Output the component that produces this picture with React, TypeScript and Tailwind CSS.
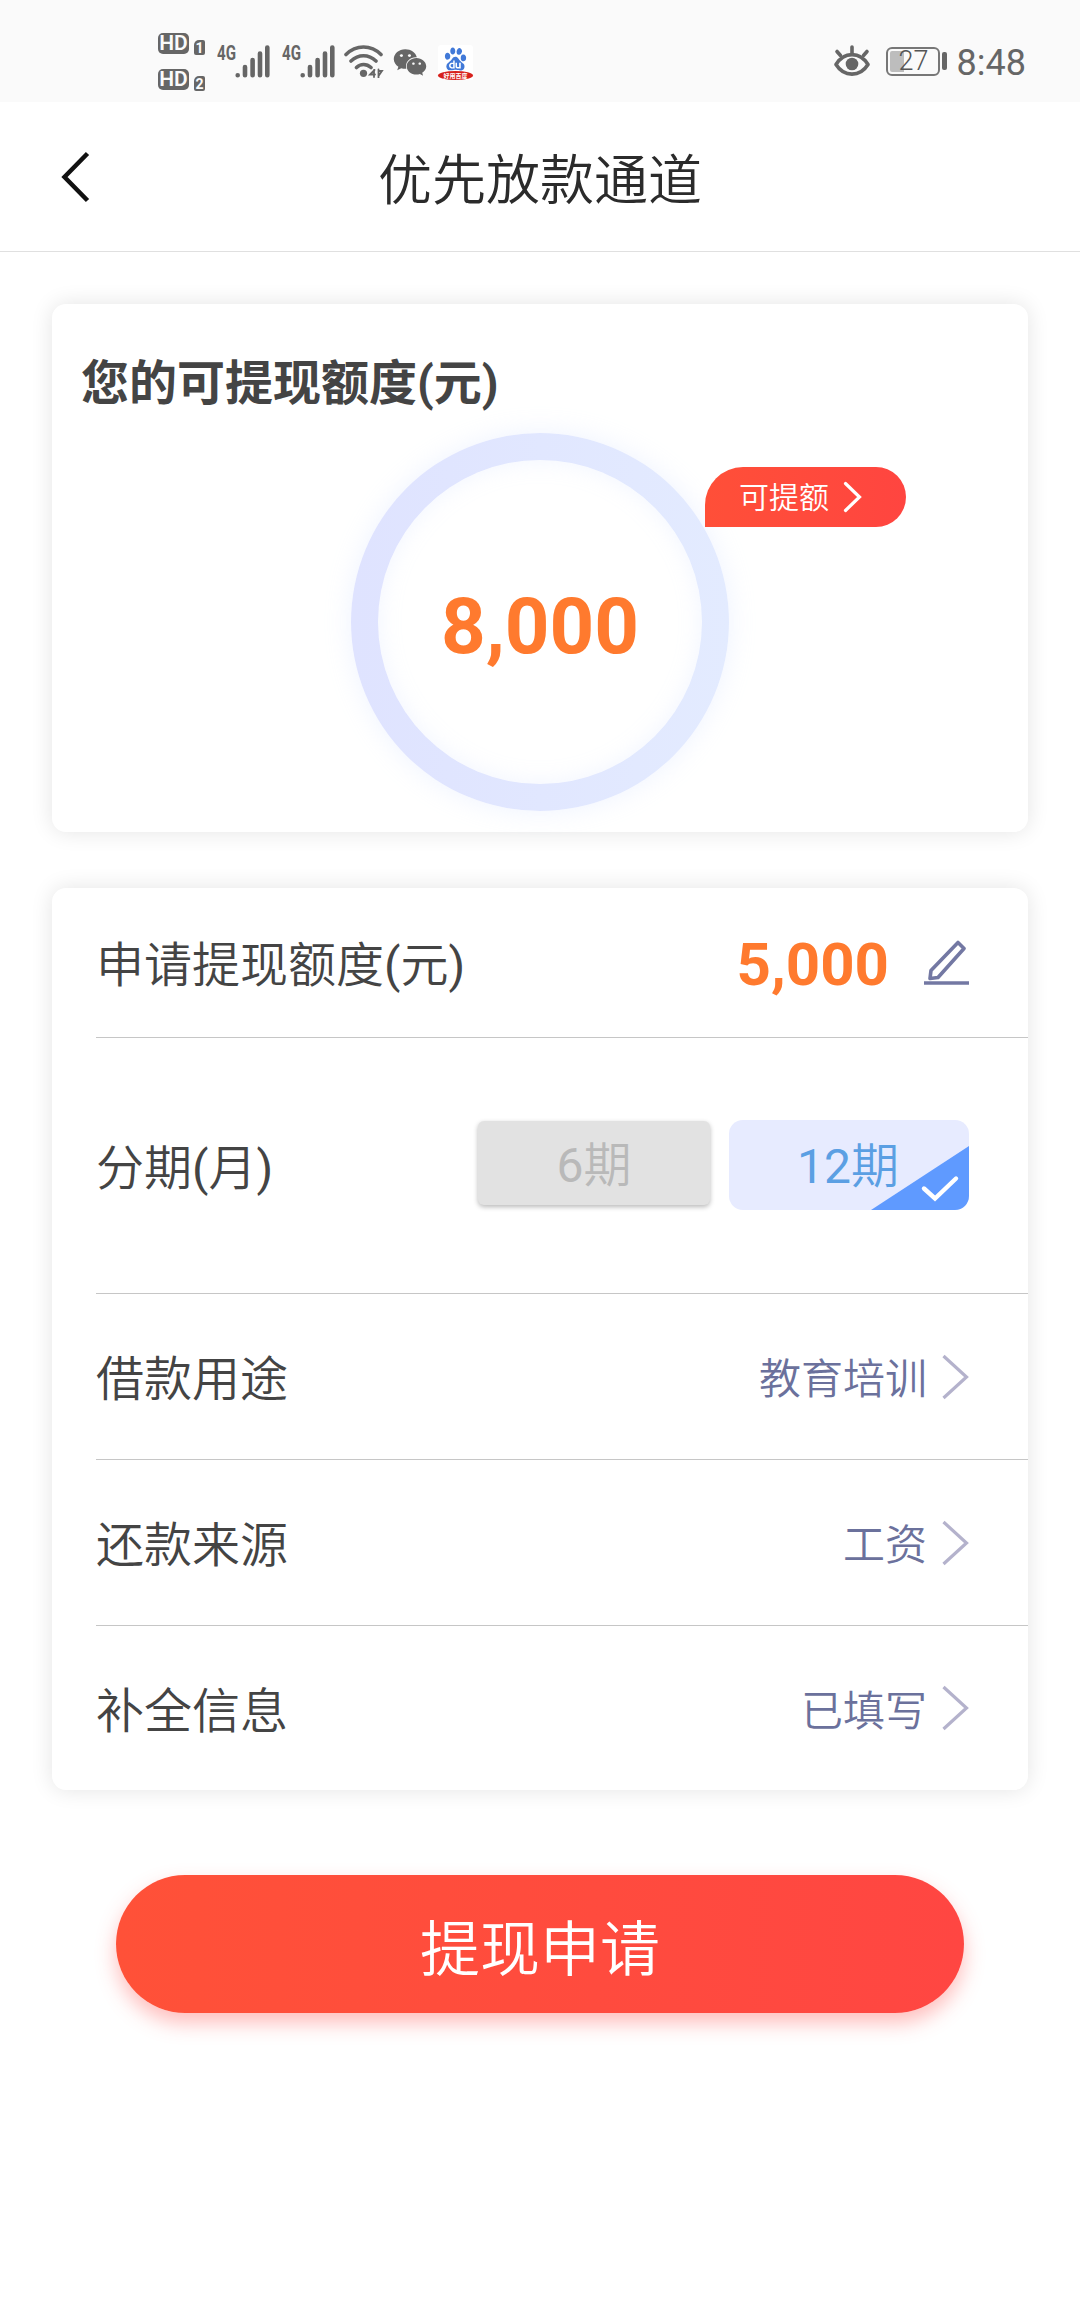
import React from 'react';
import { FaWeixin } from 'react-icons/fa';
import { SiBaidu } from 'react-icons/si';

const SimBadge: React.FC<{ slot: number }> = ({ slot }) => (
  <div className="flex items-end gap-[5px]">
    <span className="flex h-[21px] w-[31px] items-center justify-center rounded-[5px] bg-[#666] text-[21px] leading-none font-semibold text-[#fafafa]">
      HD
    </span>
    <span className="-mb-px flex h-[15px] w-[11px] items-center justify-center rounded-[2px] rounded-tl-[5px] bg-[#666] text-[14px] leading-none font-bold text-[#fafafa]">
      {slot}
    </span>
  </div>
);

const Signal: React.FC = () => (
  <div className="flex items-start">
    <span className="w-[18px] origin-left scale-x-[0.72] text-[21px] leading-[17px] font-bold text-[#666]">4G</span>
    <svg className="h-[33px] w-[35px]" viewBox="0 0 35 33" stroke="#666" strokeWidth="4.6" strokeLinecap="round">
      <path d="M2.700 30.200v.1M10 22v8.300M17.600 15v15.300M25 8.500v21.800M32.300 2.500v27.800" />
    </svg>
  </div>
);

const Wifi: React.FC = () => (
  <svg className="h-[33px] w-[40px]" viewBox="0 0 40 33" fill="none" stroke="#666" strokeWidth="3.6" strokeLinecap="round">
    <path d="M2 9.500C12-.5 27-.5 37 9.500M7 16c7.500-7 17.500-7 25 0M12.500 22.500c4-4 10-4 14.500 0" />
    <circle cx="19.500" cy="28.300" r="3.600" fill="#666" stroke="none" />
    <path d="M30 25v7M30.500 25l-4.500 4.500h5M34.500 24.500v8M34.500 31l3.500-5h-3" strokeWidth="1.800" />
  </svg>
);

const Eye: React.FC = () => (
  <svg className="h-[32px] w-[36px]" viewBox="0 0 36 32" fill="none" stroke="#666" strokeWidth="3.6" strokeLinecap="round">
    <path d="M2 19.500C10 6.300 26 6.300 34 19.500C26 32.300 10 32.300 2 19.500Z" strokeLinejoin="round" />
    <path d="M18 2v6M3 6.500l3.500 4M33 6.500l-3.500 4" />
    <circle cx="18" cy="19" r="6.300" fill="#666" stroke="none" />
  </svg>
);

const StatusBar: React.FC = () => (
  <div className="flex h-[102px] items-start justify-between bg-[#fafafa] pr-[54px] pl-[158px]">
    <div className="flex items-start">
      <div className="flex flex-col gap-[15px] pt-[33px]">
        <SimBadge slot={1} />
        <SimBadge slot={2} />
      </div>
      <div className="flex gap-3 pt-[45px] pl-[12px]">
        <Signal />
        <Signal />
      </div>
      <div className="pt-[45px] pl-[9px]">
        <Wifi />
      </div>
      <FaWeixin className="mt-[45px] ml-[9px] h-[35px] w-[34px] text-[#666]" />
      <div className="mt-[45px] ml-[11px] flex w-[35px] flex-col items-center rounded-t-[3px] bg-white">
        <SiBaidu className="mt-[2px] h-[24px] w-[23px] text-[#4179d8]" />
        <span className="flex h-[9px] w-[35px] items-center justify-center rounded-[50%] bg-[#d7211c] text-[6px] leading-none font-bold text-white">
          好用百度
        </span>
      </div>
    </div>
    <div className="flex items-start pt-[45px]">
      <Eye />
      <div className="mt-[2px] ml-4 flex h-[29px] w-[54px] items-center rounded-[6px] border-2 border-[#777] p-[2px]">
        <div className="h-[21px] w-[14px] rounded-l-[2px] bg-[#bdbdbd]" />
        <span className="-ml-[5px] text-[27px] leading-none font-light text-[#555]">27</span>
      </div>
      <div className="mt-[7px] ml-[2px] h-[18px] w-[5px] rounded-[2px] bg-[#666]" />
      <span className="ml-[10px] text-[36px] leading-[36px] text-[#666]">8:48</span>
    </div>
  </div>
);

const Header: React.FC = () => (
  <header className="grid h-[150px] grid-cols-[1fr_auto_1fr] items-center border-b border-[#e0e0e0] bg-white">
    <svg className="ml-[59px] h-[52px] w-[32px]" viewBox="0 0 32 52" fill="none" stroke="#111" strokeWidth="4.500">
      <path d="M28.500 2.500L5.500 26L28.500 49.500" />
    </svg>
    <h1 className="pt-[10px] text-[54px] leading-[60px] font-[350] text-[#2b2b2b]">优先放款通道</h1>
  </header>
);

const QuotaCard: React.FC = () => (
  <section className="relative h-[528px] rounded-[14px] bg-white pt-[50px] shadow-[0_0_22px_rgba(0,0,0,0.11)]">
    <h2 className="pl-[29px] text-[48px] leading-[60px] font-bold text-[#444]">您的可提现额度(元)</h2>
    <div className="mx-auto mt-[19px] h-[378px] w-[378px] rounded-full bg-linear-to-r from-[#dfe3ff] to-[#e3ebff] p-[27px] shadow-[0_0_26px_rgba(200,215,255,0.3)]">
      <div className="flex h-full w-full items-center justify-center rounded-full bg-white pt-[9px] text-[78px] leading-none font-bold text-[#ff7a2e] shadow-[inset_0_0_22px_rgba(200,215,255,0.25)]">
        8,000
      </div>
    </div>
    <button className="absolute top-[163px] left-[653px] flex h-[60px] w-[201px] items-center rounded-tl-[38px] rounded-r-[30px] bg-linear-to-r from-[#ff4f38] to-[#ff4540] pt-[2px] pl-[34px] text-[30px] leading-none font-[350] text-white">
      可提额
      <svg className="-mt-[2px] ml-[14px] h-[32px] w-[20px]" viewBox="0 0 20 32" fill="none" stroke="#fff" strokeWidth="3.200" strokeLinecap="round">
        <path d="M2.500 2.500L16.500 16L2.500 29.500" />
      </svg>
    </button>
  </section>
);

const TermPicker: React.FC = () => (
  <div className="mb-px flex items-start gap-[19px]">
    <button className="mt-px h-[84px] w-[232px] rounded-[6px] bg-[#e2e2e2] pt-[3px] text-[48px] leading-[84px] font-[350] text-[#b9b9b9] shadow-[0_2px_5px_rgba(0,0,0,0.28)]">
      <span className="font-normal">6</span>期
    </button>
    <button className="relative h-[90px] w-[240px] overflow-hidden rounded-[14px] bg-[#e7ebff] pr-[2px] text-[48px] leading-[93px] font-[350] text-[#5b9fe3]">
      <span className="font-normal">12</span>期
      <svg className="absolute right-0 bottom-0 h-[64px] w-[98px]" viewBox="0 0 98 64" fill="none">
        <path d="M98 0V64H0Z" fill="#5f9aff" />
        <path d="M53 42.500L64 52.500L85 32.500" stroke="#fff" strokeWidth="4.400" strokeLinecap="round" />
      </svg>
    </button>
  </div>
);

interface FormRowProps {
  label: string;
  unit?: string;
  height: string;
  last?: boolean;
  children: React.ReactNode;
}

const FormRow: React.FC<FormRowProps> = ({ label, unit, height, last, children }) => (
  <div className={`ml-[44px] flex items-center justify-between pr-[59px] ${height} ${last ? '' : 'border-b border-[#c6c6c6]'}`}>
    <span className="pt-[7px] text-[48px] leading-[60px] font-[350] text-[#444]">
      {label}
      {unit && (
        <>
          <span className="font-normal">(</span>
          {unit}
          <span className="font-normal">)</span>
        </>
      )}
    </span>
    {children}
  </div>
);

const PickedValue: React.FC<{ value: string }> = ({ value }) => (
  <div className="flex items-center text-[42px] leading-[48px] font-[350] text-[#6b719c]">
    <span className="pt-[7px]">{value}</span>
    <svg className="ml-[14px] h-[46px] w-[28px]" viewBox="0 0 28 46" fill="none" stroke="#b4b2cc" strokeWidth="3.200">
      <path d="M2.500 2L25.500 23L2.500 44" />
    </svg>
  </div>
);

const choices = [
  { label: '借款用途', value: '教育培训' },
  { label: '还款来源', value: '工资' },
  { label: '补全信息', value: '已填写' }
];

export default function App() {
  return (
    <div className="h-[2310px] w-[1080px] bg-white font-[Roboto,'Noto_Sans_CJK_SC',sans-serif]">
      <StatusBar />
      <Header />

      <main className="px-[52px] pt-[52px]">
        <QuotaCard />

        <section className="mt-14 rounded-[14px] bg-white shadow-[0_0_22px_rgba(0,0,0,0.11)]">
          <FormRow label="申请提现额度" unit="元" height="h-[150px]">
            <div className="flex items-center">
              <span className="pt-[4px] text-[60px] leading-[60px] font-bold text-[#ff7a2e]">5,000</span>
              <svg className="ml-[35px] h-[46px] w-[45px]" viewBox="0 0 45 46" fill="none" stroke="#7378a3" strokeWidth="3.600">
                <path d="M34 2.500L40 8.500L14 37.500L6 38.500L7 30.500Z" strokeLinejoin="round" />
                <path d="M0 43H45" />
              </svg>
            </div>
          </FormRow>
          <FormRow label="分期" unit="月" height="h-[256px]">
            <TermPicker />
          </FormRow>
          {choices.map((item, index) => (
            <FormRow
              key={item.label}
              label={item.label}
              height={index === choices.length - 1 ? 'h-[164px]' : 'h-[166px]'}
              last={index === choices.length - 1}
            >
              <PickedValue value={item.value} />
            </FormRow>
          ))}
        </section>

        <button className="mx-auto mt-[85px] flex h-[138px] w-[848px] items-center justify-center rounded-full bg-linear-to-r from-[#ff5138] to-[#ff4642] pt-[13px] text-[60px] leading-none font-[350] text-white shadow-[0_10px_20px_rgba(255,70,66,0.35)]">
          提现申请
        </button>
      </main>
    </div>
  );
}
